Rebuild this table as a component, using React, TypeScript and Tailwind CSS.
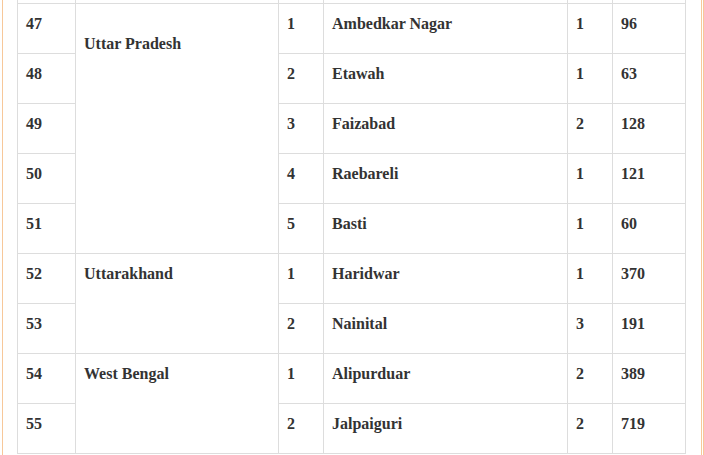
import React from "react";

type Row = { sn: number; state?: string; span?: number; offset?: number; idx: number; district: string; count: number; total: number };

const rows: Row[] = [
  { sn: 47, state: "Uttar Pradesh", span: 5, offset: 1, idx: 1, district: "Ambedkar Nagar", count: 1, total: 96 },
  { sn: 48, idx: 2, district: "Etawah", count: 1, total: 63 },
  { sn: 49, idx: 3, district: "Faizabad", count: 2, total: 128 },
  { sn: 50, idx: 4, district: "Raebareli", count: 1, total: 121 },
  { sn: 51, idx: 5, district: "Basti", count: 1, total: 60 },
  { sn: 52, state: "Uttarakhand", span: 2, idx: 1, district: "Haridwar", count: 1, total: 370 },
  { sn: 53, idx: 2, district: "Nainital", count: 3, total: 191 },
  { sn: 54, state: "West Bengal", span: 2, idx: 1, district: "Alipurduar", count: 2, total: 389 },
  { sn: 55, idx: 2, district: "Jalpaiguri", count: 2, total: 719 },
];

const cell = "border border-[#dddddd] align-top pl-[8px] pr-[8px] pt-[8px] pb-[17px] leading-[24px]";
const topCell = "border-l border-r border-b border-[#dddddd] p-0 h-[3px]";

export default function App() {
  return (
    <div className="w-[704px] h-[455px] overflow-hidden bg-white font-['Liberation_Serif','Times_New_Roman',serif]">
      <div className="ml-[2px] w-[702px] h-[455px] border-l border-r-[3px] border-double border-[#f7c89a] pl-[14px] overflow-hidden">
        <table className="table-fixed border-collapse w-[668px] text-[16px] font-bold text-[#333333] font-['Liberation_Serif','Times_New_Roman',serif]">
          <colgroup>
            <col className="w-[58px]" />
            <col className="w-[203px]" />
            <col className="w-[45px]" />
            <col className="w-[244px]" />
            <col className="w-[45px]" />
            <col className="w-[73px]" />
          </colgroup>
          <tbody>
            <tr className="h-[3px]">
              <td className={topCell}></td>
              <td className={topCell}></td>
              <td className={topCell}></td>
              <td className={topCell}></td>
              <td className={topCell}></td>
              <td className={topCell}></td>
            </tr>
            {rows.map((r) => (
              <tr key={r.sn}>
                <td className={cell}>{r.sn}</td>
                {r.state && (
                  <td className={cell} rowSpan={r.span}>
                    <div className={r.offset ? "mt-[20px]" : ""}>{r.state}</div>
                  </td>
                )}
                <td className={cell}>{r.idx}</td>
                <td className={cell}>{r.district}</td>
                <td className={cell}>{r.count}</td>
                <td className={cell}>{r.total}</td>
              </tr>
            ))}
          </tbody>
        </table>
      </div>
    </div>
  );
}
